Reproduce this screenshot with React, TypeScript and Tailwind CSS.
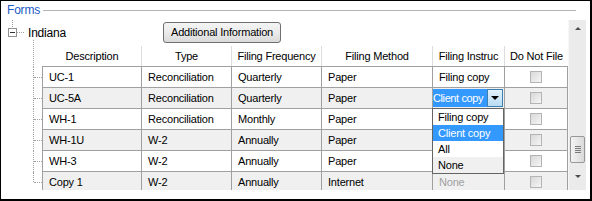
import { ReactNode } from "react";

type Row = { desc: string; type: string; freq: string; method: string; instr: string; alt: boolean };

const rows: Row[] = [
  { desc: "UC-1", type: "Reconciliation", freq: "Quarterly", method: "Paper", instr: "Filing copy", alt: false },
  { desc: "UC-5A", type: "Reconciliation", freq: "Quarterly", method: "Paper", instr: "combo", alt: true },
  { desc: "WH-1", type: "Reconciliation", freq: "Monthly", method: "Paper", instr: "", alt: false },
  { desc: "WH-1U", type: "W-2", freq: "Annually", method: "Paper", instr: "", alt: true },
  { desc: "WH-3", type: "W-2", freq: "Annually", method: "Paper", instr: "", alt: false },
  { desc: "Copy 1", type: "W-2", freq: "Annually", method: "Internet", instr: "None", alt: true },
];

const widths = ["w-[99px]", "w-[90px]", "w-[90px]", "w-[111px]", "w-[72px]", "w-[63px]"];

function Cell({ w, children, pad = "pl-[6px]" }: { w: string; children?: ReactNode; pad?: string }) {
  return (
    <div className={`${w} shrink-0 h-full border-r border-[#a0a0a0] flex items-center whitespace-nowrap ${pad}`}>
      {children}
    </div>
  );
}

function Checkbox() {
  return <div className="w-[12px] h-[12px] border border-[#b4b4b4] bg-gradient-to-br from-[#d8d8d8] to-[#f6f6f6]" />;
}

function Combo() {
  return (
    <div className="relative w-full h-full flex items-center pr-[1px]">
      <div className="flex h-[18px] w-full">
        <div className="flex-1 bg-[#3399ff] text-white flex items-center tracking-[-0.4px]">
          <span>Client copy</span>
        </div>
        <div className="w-[16px] bg-gradient-to-b from-[#e3f1fb] to-[#b9dcf4] border border-[#3c7fb1] flex items-center justify-center">
          <div className="w-0 h-0 border-l-[4px] border-r-[4px] border-t-[4px] border-l-transparent border-r-transparent border-t-black" />
        </div>
      </div>
      <div className="absolute left-[-1px] top-[20px] w-[72px] z-10 bg-white border border-[#646464] flex flex-col">
        <div className="h-[16px] flex items-center pl-[5px]">Filing copy</div>
        <div className="h-[16px] flex items-center pl-[5px] bg-[#3399ff] text-white">Client copy</div>
        <div className="h-[16px] flex items-center pl-[5px]">All</div>
        <div className="h-[16px] flex items-center pl-[5px] bg-[#f0f0f0]">None</div>
      </div>
    </div>
  );
}

export default function App() {
  return (
    <div className="w-[592px] h-[201px] bg-white border-t border-l border-r-2 border-b-2 border-black overflow-hidden font-['Liberation_Sans',Arial,sans-serif] text-[11px] tracking-[-0.2px] text-black">
      <div className="flex items-center h-[18px] pl-[6px] pr-[14px]">
        <span className="text-[#2159c4] text-[12px]">Forms</span>
        <div className="ml-[3px] flex-1 border-t border-[#b5b5b5]" />
      </div>

      <div className="flex">
        <div className="w-[567px] h-[171px] overflow-hidden">
          {/* Indiana node */}
          <div className="flex items-center h-[27px]">
            <div className="w-[162px] flex items-center pl-[7px]">
              <div className="relative w-[9px] h-[9px] border border-[#919191] bg-white flex items-center justify-center">
                <div className="absolute left-[3px] bottom-[9px] h-[9px] border-l border-dotted border-[#a0a0a0]" />
                <div className="w-[5px] border-t border-[#333]" />
              </div>
              <div className="w-[7px] border-t border-dotted border-[#a0a0a0]" />
              <span className="ml-[4px] text-[12px]">Indiana</span>
            </div>
            <button className="w-[118px] h-[21px] rounded-[3px] border border-[#707070] bg-gradient-to-b from-[#f4f4f4] via-[#ebebeb] to-[#d9d9d9] text-[11px] flex items-center justify-center">
              Additional Information
            </button>
          </div>

          {/* header */}
          <div className="flex h-[21px]">
            <div className="relative w-[41px] shrink-0">
              <div className="absolute left-[32px] top-[-6px] bottom-0 border-l border-dotted border-[#a0a0a0]" />
            </div>
            <div className="flex w-[526px] h-full border-b border-[#a0a0a0] pl-[1px]">
              {["Description", "Type", "Filing Frequency", "Filing Method", "Filing Instruc", "Do Not File"].map((h, i) => (
                <div key={h} className={`${widths[i]} shrink-0 h-full flex items-center justify-center overflow-hidden whitespace-nowrap ${i < 5 ? "border-r border-[#dcdcdc]" : ""}`}>
                  {h}
                </div>
              ))}
            </div>
          </div>

          {/* rows */}
          {rows.map((r, idx) => (
            <div key={r.desc} className="flex h-[21px]">
              <div className="relative w-[41px] shrink-0">
                <div className={`absolute left-[32px] top-0 border-l border-dotted border-[#a0a0a0] ${idx === rows.length - 1 ? "h-[10px]" : "bottom-0"}`} />
                <div className="absolute left-[33px] top-[10px] w-[8px] border-t border-dotted border-[#a0a0a0]" />
              </div>
              <div className={`flex w-[526px] h-full border-b border-l border-[#a0a0a0] ${r.alt ? "bg-[#f0f0f0]" : "bg-white"} ${r.instr === "combo" ? "relative z-10" : ""}`}>
                <Cell w={widths[0]}>{r.desc}</Cell>
                <Cell w={widths[1]}>{r.type}</Cell>
                <Cell w={widths[2]}>{r.freq}</Cell>
                <Cell w={widths[3]}>{r.method}</Cell>
                {r.instr === "combo" ? (
                  <Cell w={widths[4]} pad="pl-0">
                    <Combo />
                  </Cell>
                ) : (
                  <Cell w={widths[4]}>
                    <span className={r.instr === "None" ? "text-[#a0a0a0]" : ""}>{r.instr}</span>
                  </Cell>
                )}
                <div className={`${widths[5]} shrink-0 h-full border-r border-[#a0a0a0] flex items-center justify-center`}>
                  <Checkbox />
                </div>
              </div>
            </div>
          ))}
        </div>

        {/* scrollbar */}
        <div className="mt-[1px] w-[18px] h-[170px] bg-[#ebebeb] border-l border-[#f7f7f7] flex flex-col items-center">
          <div className="h-[17px] w-full flex items-center justify-center">
            <div className="w-0 h-0 border-l-[3px] border-r-[3px] border-b-[3px] border-l-transparent border-r-transparent border-b-[#4d4d4d]" />
          </div>
          <div className="h-[99px]" />
          <div className="w-[15px] h-[27px] rounded-[2px] border border-[#979797] bg-gradient-to-r from-[#f3f3f3] to-[#dadada] flex flex-col items-center justify-center gap-[1px]">
            <div className="w-[6px] border-t border-[#7a7a7a]" />
            <div className="w-[6px] border-t border-[#7a7a7a]" />
            <div className="w-[6px] border-t border-[#7a7a7a]" />
            <div className="w-[6px] border-t border-[#7a7a7a]" />
          </div>
          <div className="flex-1 w-full flex items-center justify-center">
            <div className="w-0 h-0 border-l-[3px] border-r-[3px] border-t-[3px] border-l-transparent border-r-transparent border-t-[#4d4d4d]" />
          </div>
        </div>
      </div>
    </div>
  );
}
